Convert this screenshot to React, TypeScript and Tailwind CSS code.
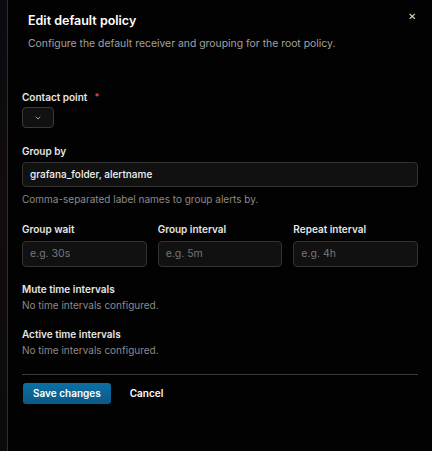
import React from "react";

function Field({ label, placeholder }: { label: string; placeholder: string }) {
  return (
    <div className="flex flex-col">
      <div className="text-[10px] font-semibold text-[#e6e6e6] leading-[12px]">{label}</div>
      <div className="mt-[6px] h-[26px] rounded-[4px] border border-[#333] bg-[#111] px-[7px] flex items-center text-[10.5px] text-[#777]">
        {placeholder}
      </div>
    </div>
  );
}

export default function App() {
  return (
    <div
      className="w-[432px] h-[451px] flex bg-black overflow-hidden"
      style={{ fontFamily: "Inter, 'Noto Sans', sans-serif" }}
    >
      <div className="w-[7px] h-full bg-gradient-to-b from-[#0a0a10] via-[#120c0c] to-[#0b0b0b]" />
      <div className="flex-1 h-full border-l border-[#2e2e2e] bg-[#020202] flex flex-col relative">
        <div className="pl-[20px] pr-[16px] pt-[13px] flex justify-between">
          <div>
            <div className="text-[12.5px] font-semibold text-white leading-[16px]">Edit default policy</div>
            <div className="mt-[8px] text-[10.4px] text-[#a0a0a0] leading-[13px]">
              Configure the default receiver and grouping for the root policy.
            </div>
          </div>
          <div className="text-[10px] text-[#ddd] leading-[10px] mt-[-2px]">✕</div>
        </div>
        <div className="px-[14px] mt-[41px] flex flex-col">
          <div className="flex items-center text-[10px] font-semibold text-[#e6e6e6] leading-[12px]">
            Contact point <span className="ml-[7px] text-[#e5484d] text-[9px]">*</span>
          </div>
          <div className="mt-[4px] w-[32px] h-[21px] rounded-[4px] border border-[#3a3a3a] bg-[#111] flex items-center justify-center">
            <svg width="8" height="8" viewBox="0 0 24 24" fill="none" stroke="#bbb" strokeWidth="2.5" strokeLinecap="round" strokeLinejoin="round">
              <path d="M6 9l6 6 6-6" />
            </svg>
          </div>

          <div className="mt-[17px] text-[10px] font-semibold text-[#e6e6e6] leading-[12px]">Group by</div>
          <div className="mt-[5px] h-[25px] rounded-[4px] border border-[#333] bg-[#111] px-[7px] flex items-center text-[10px] font-medium text-[#f2f2f2]">
            grafana_folder, alertname
          </div>
          <div className="mt-[6px] text-[10px] text-[#8a8a8a] leading-[12px]">
            Comma-separated label names to group alerts by.
          </div>

          <div className="mt-[18px] grid grid-cols-3 gap-[11px]">
            <Field label="Group wait" placeholder="e.g. 30s" />
            <Field label="Group interval" placeholder="e.g. 5m" />
            <Field label="Repeat interval" placeholder="e.g. 4h" />
          </div>

          <div className="mt-[16px] text-[10px] font-semibold text-[#e6e6e6] leading-[12px]">Mute time intervals</div>
          <div className="mt-[4px] text-[10px] text-[#8a8a8a] leading-[12px]">No time intervals configured.</div>

          <div className="mt-[17px] text-[10px] font-semibold text-[#e6e6e6] leading-[12px]">Active time intervals</div>
          <div className="mt-[4px] text-[10px] text-[#8a8a8a] leading-[12px]">No time intervals configured.</div>

          <div className="mt-[18px] h-px bg-[#3a3a3a]" />

          <div className="mt-[8px] flex items-center">
            <div className="ml-[1px] h-[21px] px-[10px] rounded-[3px] bg-gradient-to-b from-[#0d6fa3] to-[#0a5a86] flex items-center text-[10px] font-semibold text-white">
              Save changes
            </div>
            <div className="ml-[19px] text-[10px] font-semibold text-white">Cancel</div>
          </div>
        </div>
      </div>
    </div>
  );
}
